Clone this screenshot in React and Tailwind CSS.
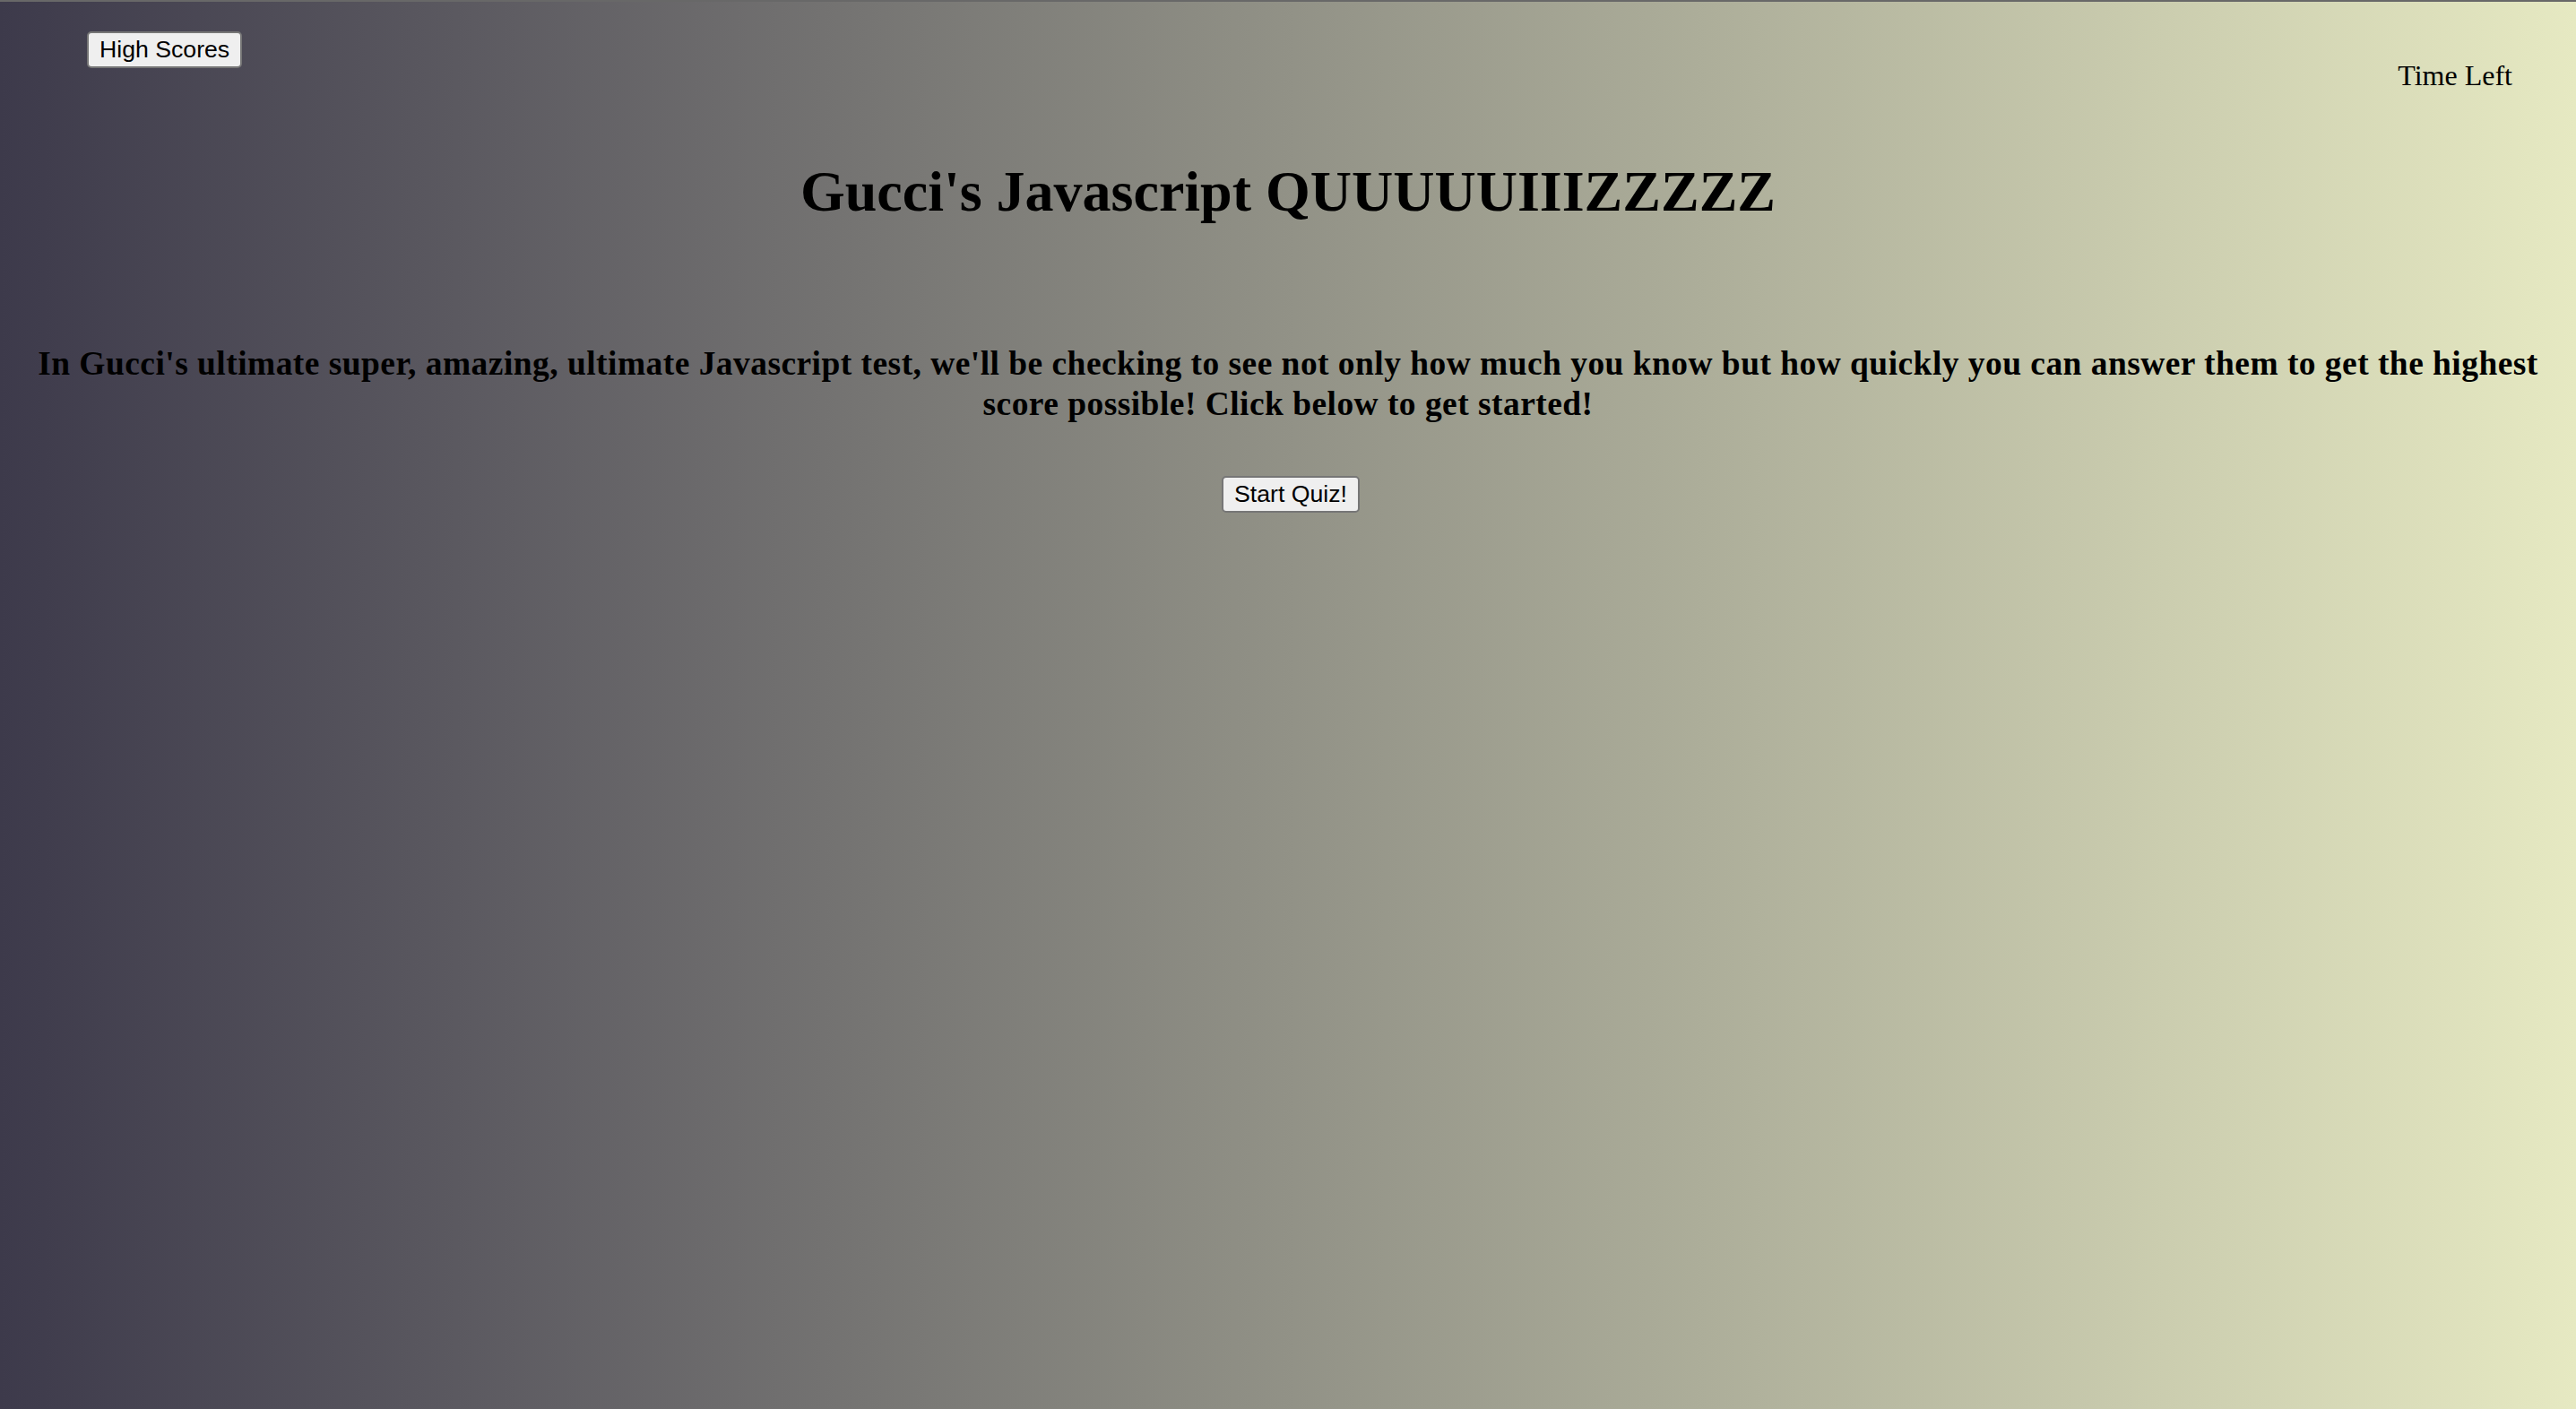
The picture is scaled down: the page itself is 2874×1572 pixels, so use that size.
import React from 'react'

const serif = { fontFamily: '"Liberation Serif", "Times New Roman", serif' }

const Btn = ({ children, className = '' }) => (
  <button
    className={`h-[41px] px-[12px] bg-[#efefef] border-2 border-[#767676] rounded-[5px] text-[26.67px] leading-[31px] text-black ${className}`}
    style={{ fontFamily: '"Liberation Sans", Arial, sans-serif' }}
  >
    {children}
  </button>
)

const App = () => {
  return (
    <div className="h-[1572px] w-full overflow-hidden border-t-2 border-[#686868] bg-[linear-gradient(to_right,#3d3a4b,#e6e9c2)] text-black">
      <header className="flex justify-between items-start">
        <Btn className="mt-[33px] ml-[97px]">High Scores</Btn>
        <div className="mt-[64px] mr-[71px] text-[32px] leading-[37px]" style={serif}>Time Left</div>
      </header>

      <h1 className="mt-[74px] text-center text-[64px] leading-[74px] font-bold" style={serif}>
        Gucci's Javascript QUUUUUIIIZZZZZ
      </h1>

      <h3 className="mt-[132px] px-4 text-center text-[37.44px] leading-[45px] font-bold tracking-[0.48px]" style={serif}>
        In Gucci's ultimate super, amazing, ultimate Javascript test, we'll be checking to see not only how much you know but how quickly you can answer them to get the highest score possible! Click below to get started!
      </h3>

      <div className="mt-[58px] flex justify-center">
        <Btn className="ml-[6px]">Start Quiz!</Btn>
      </div>
    </div>
  )
}

export default App
